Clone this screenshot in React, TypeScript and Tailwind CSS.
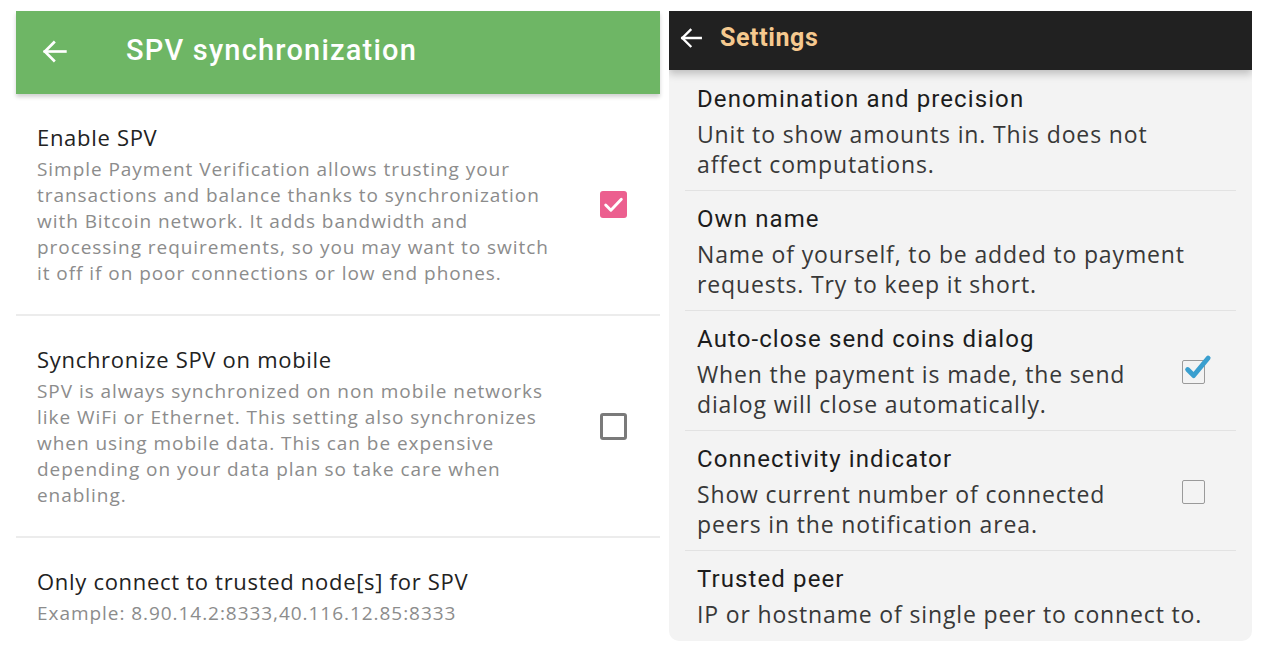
import React from 'react';

const spvItems = [
	{
		title: 'Enable SPV',
		lines: [
			'Simple Payment Verification allows trusting your',
			'transactions and balance thanks to synchronization',
			'with Bitcoin network. It adds bandwidth and',
			'processing requirements, so you may want to switch',
			'it off if on poor connections or low end phones.',
		],
		checked: true as boolean | null,
	},
	{
		title: 'Synchronize SPV on mobile',
		lines: [
			'SPV is always synchronized on non mobile networks',
			'like WiFi or Ethernet. This setting also synchronizes',
			'when using mobile data. This can be expensive',
			'depending on your data plan so take care when',
			'enabling.',
		],
		checked: false as boolean | null,
	},
	{
		title: 'Only connect to trusted node[s] for SPV',
		lines: ['Example: 8.90.14.2:8333,40.116.12.85:8333'],
		checked: null as boolean | null,
	},
];

const settingsItems = [
	{
		title: 'Denomination and precision',
		lines: ['Unit to show amounts in. This does not', 'affect computations.'],
		checked: null as boolean | null,
	},
	{
		title: 'Own name',
		lines: ['Name of yourself, to be added to payment', 'requests. Try to keep it short.'],
		checked: null as boolean | null,
	},
	{
		title: 'Auto-close send coins dialog',
		lines: ['When the payment is made, the send', 'dialog will close automatically.'],
		checked: true as boolean | null,
	},
	{
		title: 'Connectivity indicator',
		lines: ['Show current number of connected', 'peers in the notification area.'],
		checked: false as boolean | null,
	},
	{
		title: 'Trusted peer',
		lines: ['IP or hostname of single peer to connect to.'],
		checked: null as boolean | null,
	},
];

const BackArrow = ({ className }: { className?: string }) => (
	<svg viewBox="0 0 24 24" className={className} fill="none" stroke="currentColor" strokeWidth={2.2} strokeLinecap="square">
		<path d="M21 12H4" />
		<path d="M11.5 4.5L4 12l7.5 7.5" />
	</svg>
);

const PinkCheckbox = ({ checked }: { checked: boolean }) =>
	checked ? (
		<div className="w-[27px] h-[27px] rounded-[3px] bg-[#ec5f8f] flex items-center justify-center">
			<svg viewBox="0 0 24 24" className="w-[25px] h-[25px]" fill="none" stroke="white" strokeWidth={2.8} strokeLinecap="round" strokeLinejoin="round">
				<path d="M4.5 12.5l5 5L19.5 7" />
			</svg>
		</div>
	) : (
		<div className="w-[27px] h-[27px] rounded-[3px] border-[3px] border-[#7a7a7a]" />
	);

const GreyCheckbox = ({ checked }: { checked: boolean }) => (
	<div className="relative w-[23px] h-[24px] rounded-[2px] border-[1.5px] border-[#9a9a9a]">
		{checked && (
			<svg viewBox="0 0 24 24" className="absolute -top-[9px] left-[1px] w-[29px] h-[29px]" fill="none" stroke="#3a9fcf" strokeWidth={4} strokeLinecap="round" strokeLinejoin="round">
				<path d="M3 14.5l5 5L20 5" />
			</svg>
		)}
	</div>
);

export default function App() {
	return (
		<div className="w-[1280px] h-[659px] bg-white flex items-start pt-[11px]">
			{/* left: SPV synchronization */}
			<div className="ml-4 w-[644px] bg-white">
				<div className="relative z-10 h-[83px] bg-[#6eb665] flex items-center pb-[3px] shadow-[0_3px_4px_rgba(0,0,0,0.18)]">
					<BackArrow className="ml-[24px] w-[29px] h-[29px] text-white" />
					<span className="ml-[57px] text-white text-[29px] font-medium tracking-[1.2px]" style={{ fontFamily: 'Roboto, sans-serif' }}>
						SPV synchronization
					</span>
				</div>
				{spvItems.map((item, i) => (
					<div key={i}>
						{i > 0 && <div className="h-[2px] bg-[#ececec]" />}
						<div className="flex items-center pl-[21px] pr-[33px] py-[28px]" style={{ fontFamily: '"Open Sans", sans-serif' }}>
							<div className="flex-1">
								<div className="text-[22px] leading-[30px] text-[#222] tracking-[0.7px]">{item.title}</div>
								<div className="mt-1 text-[19px] leading-[26px] text-[#8c8c8c] tracking-[0.95px]">
									{item.lines.map((l, j) => (
										<div key={j}>{l}</div>
									))}
								</div>
							</div>
							{item.checked !== null && <PinkCheckbox checked={item.checked} />}
						</div>
					</div>
				))}
			</div>

			{/* right: Settings */}
			<div className="ml-[9px] w-[583px] h-[630px] bg-[#f3f3f3] rounded-b-[10px] overflow-hidden">
				<div className="relative z-10 h-[59px] bg-[#212121] flex items-center pb-[6px] shadow-[0_4px_8px_rgba(0,0,0,0.22)]">
					<BackArrow className="ml-[9px] w-[26px] h-[26px] text-white" />
					<span className="ml-[16px] text-[#f5c98f] text-[25px] font-bold tracking-[0.6px]" style={{ fontFamily: 'Roboto, sans-serif' }}>
						Settings
					</span>
				</div>
				{settingsItems.map((item, i) => (
					<div key={i}>
						{i > 0 && <div className="mx-4 h-px bg-[#e2e2e2]" />}
						<div className={`flex items-center pl-[28px] pr-[47px] ${i === 0 ? 'pt-[14px]' : 'pt-[13px]'} pb-[11px]`}>
							<div className="flex-1 whitespace-nowrap">
								<div className="text-[24px] leading-[30px] text-[#1c1c1c] tracking-[1.1px]" style={{ fontFamily: 'Roboto, sans-serif' }}>
									{item.title}
								</div>
								<div className="mt-[5px] text-[23px] leading-[30px] text-[#383838] tracking-[0.85px]" style={{ fontFamily: '"Open Sans", sans-serif' }}>
									{item.lines.map((l, j) => (
										<div key={j}>{l}</div>
									))}
								</div>
							</div>
							{item.checked !== null && <GreyCheckbox checked={item.checked} />}
						</div>
					</div>
				))}
			</div>
		</div>
	);
}
